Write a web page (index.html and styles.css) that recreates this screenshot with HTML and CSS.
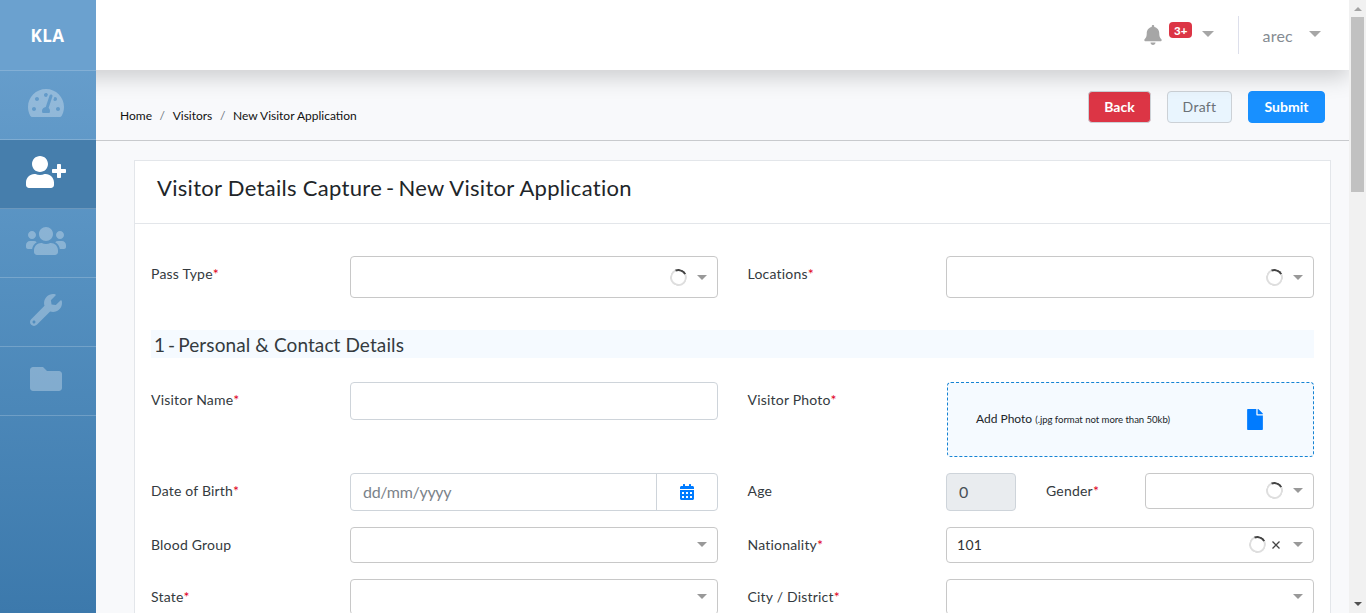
FILE: index.html
```html
<!DOCTYPE html>
<html lang="en">
<head>
<meta charset="utf-8">
<title>New Visitor Application</title>
<link rel="stylesheet" href="styles.css">
</head>
<body>
<div class="app">
  <nav class="sidebar">
    <div class="brand">KLA</div>
    <a class="nav-item"><svg width="36" height="32" viewBox="0 0 576 512"><path d="M288 32C128.94 32 0 160.94 0 320c0 52.8 14.25 102.26 39.06 144.8 5.61 9.62 16.3 15.2 27.44 15.2h443c11.14 0 21.83-5.58 27.44-15.2C561.75 422.26 576 372.8 576 320c0-159.06-128.94-288-288-288zm0 64c14.71 0 26.58 10.13 30.32 23.65-1.11 2.26-2.64 4.23-3.45 6.67l-9.22 27.67c-5.13 3.49-10.97 6.01-17.64 6.01-17.67 0-32-14.33-32-32S270.33 96 288 96zM96 384c-17.67 0-32-14.33-32-32s14.33-32 32-32 32 14.33 32 32-14.33 32-32 32zm48-160c-17.67 0-32-14.33-32-32s14.33-32 32-32 32 14.33 32 32-14.33 32-32 32zm246.77-72.41l-61.33 184C343.13 347.33 352 364.54 352 384c0 11.72-3.38 22.55-8.88 32H232.88c-5.5-9.45-8.88-20.28-8.88-32 0-33.94 26.5-61.43 59.9-63.59l61.34-184.01c4.17-12.56 17.73-19.45 30.36-15.17 12.57 4.19 19.35 17.79 15.17 30.36zm14.66 57.2l15.52-46.55c3.47-1.29 7.13-2.23 11.05-2.23 17.67 0 32 14.33 32 32s-14.33 32-32 32c-11.38-.01-20.89-6.28-26.57-15.22zM480 384c-17.67 0-32-14.33-32-32s14.33-32 32-32 32 14.33 32 32-14.33 32-32 32z"/></svg></a>
    <a class="nav-item active"><svg width="40" height="32" viewBox="0 0 640 512"><path d="M624 208h-64v-64c0-8.8-7.2-16-16-16h-32c-8.8 0-16 7.2-16 16v64h-64c-8.8 0-16 7.2-16 16v32c0 8.8 7.2 16 16 16h64v64c0 8.8 7.2 16 16 16h32c8.8 0 16-7.2 16-16v-64h64c8.8 0 16-7.2 16-16v-32c0-8.8-7.2-16-16-16zm-400 48c70.7 0 128-57.3 128-128S294.7 0 224 0 96 57.3 96 128s57.3 128 128 128zm89.6 32h-16.7c-22.2 10.2-46.9 16-72.9 16s-50.6-5.8-72.9-16h-16.7C60.2 288 0 348.2 0 422.4V464c0 26.5 21.5 48 48 48h352c26.5 0 48-21.5 48-48v-41.600c0-74.200-60.200-134.400-134.400-134.400z"/></svg></a>
    <a class="nav-item"><svg width="40" height="32" viewBox="0 0 640 512"><path d="M96 224c35.300 0 64-28.700 64-64s-28.700-64-64-64-64 28.700-64 64 28.700 64 64 64zm448 0c35.300 0 64-28.700 64-64s-28.700-64-64-64-64 28.700-64 64 28.700 64 64 64zm32 32h-64c-17.600 0-33.500 7.100-45.100 18.600 40.300 22.100 68.900 62 75.100 109.400h66c17.700 0 32-14.300 32-32v-32c0-35.300-28.700-64-64-64zm-256 0c61.900 0 112-50.100 112-112S381.900 32 320 32 208 82.100 208 144s50.100 112 112 112zm76.800 32h-8.300c-20.800 10-43.900 16-68.500 16s-47.600-6-68.500-16h-8.300C179.600 288 128 339.600 128 403.200V432c0 26.500 21.500 48 48 48h288c26.500 0 48-21.500 48-48v-28.800c0-63.600-51.600-115.200-115.200-115.200zm-223.700-13.400C161.500 263.100 145.600 256 128 256H64c-35.300 0-64 28.700-64 64v32c0 17.700 14.300 32 32 32h65.900c6.300-47.400 34.900-87.300 75.200-109.400z"/></svg></a>
    <a class="nav-item"><svg width="32" height="32" viewBox="0 0 512 512"><path d="M507.730 109.100c-2.240-9.030-13.540-12.090-20.120-5.510l-74.360 74.360-67.880-11.310-11.310-67.880 74.360-74.360c6.620-6.620 3.430-17.900-5.660-20.160-47.380-11.740-99.550.91-136.580 37.930-39.640 39.640-50.550 97.100-34.050 147.200L18.740 402.760c-24.990 24.990-24.990 65.510 0 90.500 24.990 24.990 65.510 24.990 90.500 0l213.210-213.210c50.120 16.710 107.470 5.680 147.370-34.220 37.070-37.070 49.700-89.320 37.910-136.730zM64 472c-13.250 0-24-10.750-24-24 0-13.260 10.750-24 24-24s24 10.740 24 24c0 13.250-10.750 24-24 24z"/></svg></a>
    <a class="nav-item"><svg width="32" height="32" viewBox="0 0 512 512"><path d="M464 128H272l-64-64H48C21.490 64 0 85.490 0 112v288c0 26.510 21.490 48 48 48h416c26.510 0 48-21.490 48-48V176c0-26.510-21.490-48-48-48z"/></svg></a>
  </nav>

  <div class="page">
    <header class="topbar">
      <svg class="bell" width="18" height="20" viewBox="0 0 448 512"><path d="M224 512c35.320 0 63.970-28.650 63.970-64H160.030c0 35.350 28.650 64 63.970 64zm215.390-149.710c-19.320-20.760-55.470-51.990-55.470-154.290 0-77.700-54.480-139.900-127.940-155.160V32c0-17.670-14.320-32-31.980-32s-31.980 14.330-31.980 32v20.840C118.560 68.100 64.080 130.300 64.080 208c0 102.300-36.150 133.530-55.470 154.290-6 6.450-8.660 14.160-8.610 21.710.11 16.400 12.980 32 32.100 32h383.800c19.120 0 32-15.600 32.100-32 .05-7.550-2.610-15.270-8.610-21.710z"/></svg>
      <span class="badge">3+</span>
      <i class="caret caret-lg"></i>
      <span class="divider"></span>
      <span class="user">arec</span>
      <i class="caret caret-lg"></i>
    </header>

    <div class="toolbar">
      <ol class="crumbs"><li>Home</li><li class="sep">/</li><li>Visitors</li><li class="sep">/</li><li>New Visitor Application</li></ol>
      <div class="actions">
        <button class="btn btn-back">Back</button>
        <button class="btn btn-draft">Draft</button>
        <button class="btn btn-submit">Submit</button>
      </div>
    </div>

    <main class="card">
      <h1 class="card-title">Visitor Details Capture <span class="dash">-</span> New Visitor Application</h1>
      <div class="card-body">
        <div class="row row-first">
          <label class="label">Pass Type<b>*</b></label>
          <div class="select tall"><i class="spinner"></i><i class="caret"></i></div>
          <label class="label second">Locations<b>*</b></label>
          <div class="select tall"><i class="spinner"></i><i class="caret"></i></div>
        </div>

        <h2 class="section">1 <span class="dash">-</span> Personal &amp; Contact Details</h2>

        <div class="row">
          <label class="label">Visitor Name<b>*</b></label>
          <div class="input"></div>
          <label class="label second">Visitor Photo<b>*</b></label>
          <div class="upload">
            <span class="upload-text">Add Photo <small>(.jpg format not more than 50kb)</small></span>
            <svg width="16" height="21" viewBox="0 0 384 512"><path d="M224 136V0H24C10.700 0 0 10.700 0 24v464c0 13.300 10.700 24 24 24h336c13.300 0 24-10.700 24-24V160H248c-13.200 0-24-10.800-24-24zm160-14.100v6.100H256V0h6.100c6.400 0 12.500 2.500 17 7l97.900 98c4.500 4.500 7 10.600 7 16.900z"/></svg>
          </div>
        </div>

        <div class="row">
          <label class="label">Date of Birth<b>*</b></label>
          <div class="input date">
            <span class="placeholder">dd/mm/yyyy</span>
            <span class="date-btn"><svg width="14" height="16" viewBox="0 0 448 512"><path fill-rule="evenodd" d="M0 464c0 26.500 21.500 48 48 48h352c26.500 0 48-21.500 48-48V192H0v272zm320-196c0-6.600 5.400-12 12-12h40c6.600 0 12 5.400 12 12v40c0 6.600-5.400 12-12 12h-40c-6.600 0-12-5.400-12-12v-40zm0 128c0-6.600 5.400-12 12-12h40c6.600 0 12 5.400 12 12v40c0 6.600-5.400 12-12 12h-40c-6.600 0-12-5.400-12-12v-40zM192 268c0-6.600 5.400-12 12-12h40c6.600 0 12 5.400 12 12v40c0 6.600-5.400 12-12 12h-40c-6.600 0-12-5.400-12-12v-40zm0 128c0-6.600 5.400-12 12-12h40c6.600 0 12 5.400 12 12v40c0 6.600-5.400 12-12 12h-40c-6.600 0-12-5.400-12-12v-40zM64 268c0-6.600 5.400-12 12-12h40c6.600 0 12 5.400 12 12v40c0 6.600-5.400 12-12 12H76c-6.600 0-12-5.400-12-12v-40zm0 128c0-6.600 5.400-12 12-12h40c6.600 0 12 5.400 12 12v40c0 6.600-5.400 12-12 12H76c-6.600 0-12-5.400-12-12v-40zM400 64h-48V16c0-8.800-7.200-16-16-16h-32c-8.800 0-16 7.200-16 16v48H160V16c0-8.800-7.200-16-16-16h-32c-8.800 0-16 7.200-16 16v48H48C21.500 64 0 85.500 0 112v48h448v-48c0-26.500-21.500-48-48-48z"/></svg></span>
          </div>
          <label class="label second">Age</label>
          <div class="split">
            <div class="input age">0</div>
            <label class="label">Gender<b>*</b></label>
            <div class="select"><i class="spinner"></i><i class="caret"></i></div>
          </div>
        </div>

        <div class="row">
          <label class="label">Blood Group</label>
          <div class="select"><i class="caret"></i></div>
          <label class="label second">Nationality<b>*</b></label>
          <div class="select"><span class="value">101</span><i class="spinner"></i><svg class="clear" width="8" height="8" viewBox="0 0 8 8"><path d="M0.500 0.500l7 7M7.500 0.500l-7 7"/></svg><i class="caret"></i></div>
        </div>

        <div class="row">
          <label class="label">State<b>*</b></label>
          <div class="select"><i class="caret"></i></div>
          <label class="label second">City / District<b>*</b></label>
          <div class="select"><i class="caret"></i></div>
        </div>
      </div>
    </main>
  </div>

  <div class="scrollbar">
    <i class="arrow up"></i>
    <span class="thumb"></span>
    <i class="arrow down"></i>
  </div>
</div>
</body>
</html>
```
FILE: styles.css
```css
* { box-sizing: border-box; }
html, body { height: 100%; }
body { margin: 0; overflow: hidden; background: #f8f9fb; font-family: Lato, "Open Sans", sans-serif; color: #212529; }
.app { display: flex; height: 100vh; overflow: hidden; }

/* Sidebar */
.sidebar { position: relative; z-index: 2; flex: 0 0 96px; background: linear-gradient(180deg, #6ba1cf 0%, #5590c0 45%, #3c79ac 100%); }
.brand { height: 71px; padding-right: 1px; border-bottom: 1px solid #83afd5; background: #6ba1cf; color: #fff; font: 700 17px/71px "Open Sans", sans-serif; letter-spacing: .4px; text-align: center; }
.nav-item { display: flex; align-items: center; justify-content: center; height: 69px; padding: 0 4px 4px 0; border-bottom: 1px solid rgba(255,255,255,.2); fill: rgba(255,255,255,.3); }
.nav-item.active { background: #467eac; fill: #fff; }

/* Page */
.page { flex: 1; min-width: 0; height: 100vh; overflow: hidden; }
.topbar { position: relative; z-index: 1; display: flex; align-items: center; justify-content: flex-end; height: 70px; margin-left: -96px; padding-right: 28px; background: #fff; box-shadow: 0 8px 20px rgba(0,0,0,.17); }
.bell { margin-bottom: 1px; fill: #a6a6a6; }
.badge { height: 16px; margin: 0 10px 10px 7px; padding: 0 5px; border-radius: 4px; background: #dc3545; color: #fff; font: 900 11.500px/17px Lato, sans-serif; }
.divider { width: 1px; height: 38px; margin: 0 23px 0 24px; background: #dddfeb; }
.user { margin: 1px 16px 0 0; font-size: 16px; line-height: 20px; letter-spacing: .25px; color: #858b92; }
.caret { width: 0; height: 0; border: 5px solid transparent; border-top-color: #999; border-bottom: 0; }
.caret-lg { margin-bottom: 2px; border-width: 6px 6px 0; border-top-color: #a6a6a6; }

.toolbar { display: flex; justify-content: space-between; height: 71px; padding: 21px 24px 0; border-bottom: 1px solid #c8cacd; }
.crumbs { display: flex; margin: 17px 0 0; padding: 0; list-style: none; font-size: 12px; line-height: 16px; color: #111; }
.crumbs .sep { margin: 0 7.600px; color: #6c757d; }
.actions { display: flex; gap: 16px; }
.btn { height: 32px; padding: 0; border: 1px solid #ccd1d6; border-radius: 4px; font: 700 14px/20px Lato, sans-serif; color: #fff; }
.btn-back { width: 63px; background: #dc3545; }
.btn-draft { width: 65px; background: #e9f5fe; color: #6b7177; font-weight: 400; letter-spacing: .3px; }
.btn-submit { width: 77px; background: #1890ff; border-color: #1890ff; }

/* Form card */
.card { height: 600px; margin: 19px 18px 0 38px; border: 1px solid #e3e6ea; background: #fff; }
.card-title { height: 63px; margin: 0; padding: 13px 22px; border-bottom: 1px solid #e3e6ea; font-size: 22px; line-height: 27px; font-weight: 400; letter-spacing: .3px; }
.dash { margin: 0 -2px; }
.card-body { padding: 32px 16px 0; }
.row { display: grid; grid-template-columns: 199px 368px 228px 368px; align-items: start; margin-bottom: 16px; }
.row-first { margin-bottom: 32px; }
.label { padding-top: 8px; font-size: 14px; line-height: 20px; letter-spacing: .2px; color: #343a40; }
.label.second { padding-left: 29.500px; }
.label b { color: #e0001b; font-weight: 400; letter-spacing: 0; }
.section { height: 28px; margin: 0 0 24px; padding-left: 3px; background: #f5faff; font-size: 19px; line-height: 29px; font-weight: 400; letter-spacing: .1px; color: #343a40; }
.select { display: flex; align-items: center; justify-content: flex-end; height: 36px; padding-right: 10px; border: 1px solid #c8c8c8; border-radius: 4px; background: #fff; }
.select.tall { height: 42px; }
.select.tall .spinner { margin-bottom: 0; }
.select:not(.tall) .caret { margin-bottom: 1px; }
.value { flex: 1; padding: 0 0 1px 10px; font-size: 14px; letter-spacing: .3px; color: #333; }
.spinner { width: 17px; height: 17px; margin: 0 10px 1px 0; border: 2px solid #dedede; border-top-color: #444; border-radius: 50%; transform: rotate(20deg); }
.clear { margin: 0 13px 1px -4px; fill: none; stroke: #444; stroke-width: 1.300; }
.input { height: 38px; border: 1px solid #ced4da; border-radius: 4px; }
.date { display: flex; justify-content: space-between; }
.placeholder { padding-left: 12px; font-size: 16px; line-height: 36px; letter-spacing: -.3px; color: #7b838a; }
.date-btn { display: flex; align-items: center; justify-content: center; width: 61px; padding-right: 1px; border-left: 1px solid #ced4da; fill: #007bff; }
.split { display: grid; grid-template-columns: 70px 129px 169px; align-items: start; }
.split .label { padding-left: 30px; }
.age { padding-left: 12px; background: #e9ecef; color: #495057; font-size: 16px; line-height: 36px; }
.upload { display: flex; align-items: center; justify-content: space-between; height: 75px; margin-left: 1px; padding: 0 50px 0 28px; border: 1px dashed #1583d3; border-radius: 4px; background: #f5faff; fill: #007bff; }
.upload-text { padding-bottom: 2px; font-size: 12px; }
.upload-text small { font-size: 9.600px; letter-spacing: -.05px; }

/* Scrollbar */
.scrollbar { display: flex; flex-direction: column; align-items: center; flex: 0 0 17px; background: #f1f1f1; position: relative; z-index: 2; }
.thumb { width: 13px; height: 175px; margin-top: 6px; background: #c1c1c1; }
.arrow { width: 0; height: 0; border: 4px solid transparent; }
.up { margin-top: 7px; border-top: 0; border-bottom-color: #a3a3a3; }
.down { margin: auto 0 7px; border-bottom: 0; border-top-color: #505050; }
```
